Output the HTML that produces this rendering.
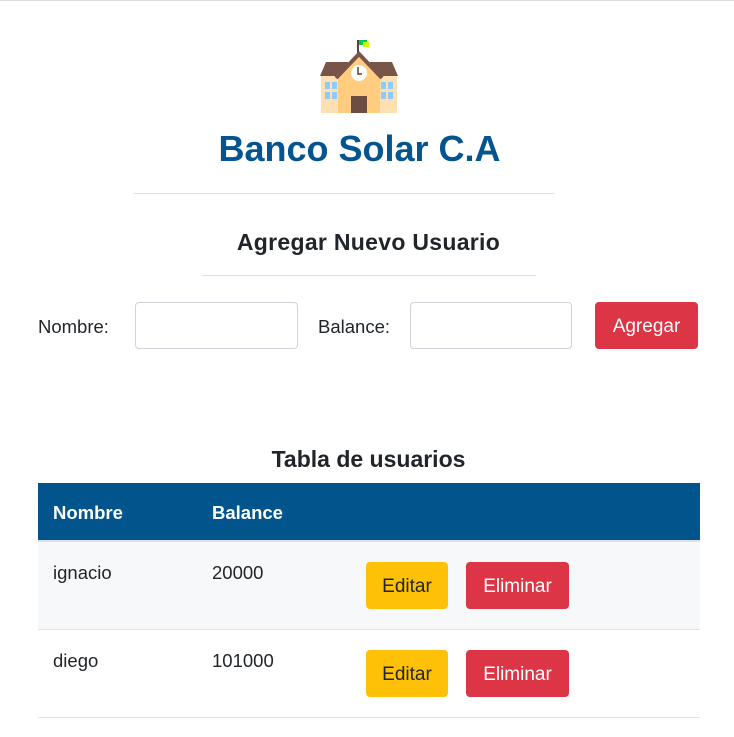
<!DOCTYPE html>
<html><head><meta charset="utf-8"><style>
*{box-sizing:border-box;margin:0;padding:0}
body{width:734px;height:737px;background:#fff;font-family:"Liberation Sans",sans-serif;color:#212529;position:relative;overflow:hidden}
.a{position:absolute}
.hr{position:absolute;height:1px;background:#e0e0e0}
.inp{position:absolute;border:1px solid #ced4da;border-radius:4px;background:#fff}
.btn{position:absolute;border-radius:4px;display:flex;align-items:center;justify-content:center;font-size:19px;padding-top:2px}
.red{background:#dc3545;color:#fff}
.yel{background:#ffc107;color:#212529}
.t{position:absolute;font-size:18.5px}
</style></head><body>
<div class="a" style="left:0;top:0;width:734px;height:1px;background:#dcdcdc"></div>
<svg class="a" style="left:320px;top:38px" width="78" height="76" viewBox="0 0 78 76">
<rect x="37" y="2" width="2" height="18" fill="#5d4037"/>
<rect x="39" y="2" width="8" height="5" fill="#00c853"/>
<rect x="43" y="4" width="6" height="5" fill="#c6ff00"/>
<rect x="1" y="38" width="76" height="37" fill="#ffe0b2"/>
<polygon points="0,38 6,24 28,24 28,38" fill="#795548"/>
<polygon points="78,38 72,24 50,24 50,38" fill="#795548"/>
<polygon points="18,38 39,16 60,38 60,75 18,75" fill="#ffcc80"/>
<polyline points="16,40 39,16 62,40" fill="none" stroke="#795548" stroke-width="4"/>
<circle cx="39" cy="35" r="8" fill="#fff"/>
<path d="M38 29v7h4" stroke="#5d4037" stroke-width="1.5" fill="none"/>
<rect x="31" y="58" width="16" height="17" fill="#6d4c41"/>
<g fill="#90caf9"><rect x="5" y="44" width="5" height="7"/><rect x="12" y="44" width="5" height="7"/><rect x="5" y="54" width="5" height="7"/><rect x="12" y="54" width="5" height="7"/><rect x="61" y="44" width="5" height="7"/><rect x="68" y="44" width="5" height="7"/><rect x="61" y="54" width="5" height="7"/><rect x="68" y="54" width="5" height="7"/></g>
</svg>
<div class="a" style="left:0;width:719px;top:128px;text-align:center;font-size:36px;color:#04558f;font-weight:bold">Banco Solar C.A</div>
<div class="hr" style="left:134px;width:420px;top:193px"></div>
<div class="a" style="left:0;width:737px;top:229px;text-align:center;font-size:23px;font-weight:bold;color:#212529;letter-spacing:0.3px">Agregar Nuevo Usuario</div>
<div class="hr" style="left:202px;width:334px;top:275px"></div>
<div class="t" style="left:38px;top:316px">Nombre:</div>
<div class="inp" style="left:135px;top:302px;width:163px;height:47px"></div>
<div class="t" style="left:318px;top:316px">Balance:</div>
<div class="inp" style="left:410px;top:302px;width:162px;height:47px"></div>
<div class="btn red" style="left:595px;top:302px;width:103px;height:47px">Agregar</div>
<div class="a" style="left:0;width:737px;top:446px;text-align:center;font-size:23px;font-weight:bold">Tabla de usuarios</div>
<div class="a" style="left:38px;top:483px;width:662px;height:57px;background:#02548c"></div>
<div class="a" style="left:38px;top:540px;width:662px;height:2px;background:#dee2e6"></div>
<div class="t" style="left:53px;top:502px;color:#fff;font-weight:bold">Nombre</div>
<div class="t" style="left:212px;top:502px;color:#fff;font-weight:bold">Balance</div>
<div class="a" style="left:38px;top:542px;width:662px;height:87px;background:#f7f8fa"></div>
<div class="a" style="left:38px;top:629px;width:662px;height:1px;background:#dee2e6"></div>
<div class="a" style="left:38px;top:717px;width:662px;height:1px;background:#dee2e6"></div>
<div class="t" style="left:53px;top:562px">ignacio</div>
<div class="t" style="left:212px;top:562px">20000</div>
<div class="btn yel" style="left:366px;top:562px;width:82px;height:47px">Editar</div>
<div class="btn red" style="left:466px;top:562px;width:103px;height:47px">Eliminar</div>
<div class="t" style="left:53px;top:650px">diego</div>
<div class="t" style="left:212px;top:650px">101000</div>
<div class="btn yel" style="left:366px;top:650px;width:82px;height:47px">Editar</div>
<div class="btn red" style="left:466px;top:650px;width:103px;height:47px">Eliminar</div>
</body></html>
